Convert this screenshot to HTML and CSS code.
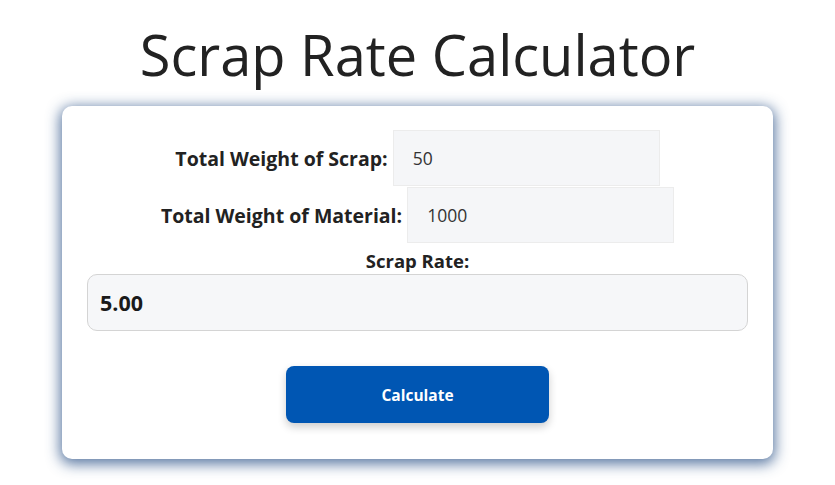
FILE: index.html
```html
<!DOCTYPE html>
<html lang="en">
<head>
<meta charset="utf-8">
<title>Scrap Rate Calculator</title>
<link rel="stylesheet" href="styles.css">
</head>
<body>
<h1 class="title">Scrap Rate Calculator</h1>
<div class="card">
  <div class="row">
    <label class="label" for="scrap">Total Weight of Scrap:</label>
    <input class="field" id="scrap" type="text" value="50">
  </div>
  <div class="row">
    <label class="label" for="material">Total Weight of Material:</label>
    <input class="field" id="material" type="text" value="1000">
  </div>
  <div class="result-label">Scrap Rate:</div>
  <div class="result">5.00</div>
  <div class="actions">
    <button class="btn" type="button">Calculate</button>
  </div>
</div>
</body>
</html>
```
FILE: styles.css
```css
html, body {
  margin: 0;
  padding: 0;
  background: #ffffff;
}
body {
  font-family: "Open Sans", "Noto Sans", sans-serif;
  color: #222222;
  padding-top: 14px;
  padding-bottom: 26px;
}
.title {
  margin: 0;
  text-align: center;
  font-weight: 400;
  font-size: 56px;
  line-height: 80px;
  color: #222222;
}
.card {
  width: 711px;
  box-sizing: border-box;
  margin: 12px auto 0;
  background: #fff;
  border-radius: 10px;
  padding: 24px 25px 36px;
  box-shadow: 0 3px 14px 2px rgba(60, 95, 145, 0.85);
}
.row {
  display: flex;
  justify-content: center;
  align-items: center;
  gap: 5px;
  margin-bottom: 1px;
}
.label {
  font-weight: 700;
  font-size: 19.5px;
  color: #222;
}
.field {
  width: 267px;
  height: 56px;
  box-sizing: border-box;
  border: 1px solid #ececec;
  background: #f5f6f8;
  padding: 0 19px;
  font-family: inherit;
  font-size: 17.5px;
  color: #333;
  outline: none;
  margin: 0;
}
.result-label {
  text-align: center;
  font-weight: 700;
  font-size: 18.5px;
  margin-top: 4px;
  line-height: 27px;
}
.result {
  height: 57px;
  box-sizing: border-box;
  border: 1px solid #d4d4d4;
  border-radius: 10px;
  background: #f6f7f9;
  display: flex;
  align-items: center;
  padding: 0 12px;
  font-weight: 700;
  font-size: 21.5px;
  color: #1a1a1a;
}
.actions {
  display: flex;
  justify-content: center;
  margin-top: 35px;
}
.btn {
  width: 263px;
  height: 57px;
  border: none;
  border-radius: 8px;
  background: #0056b3;
  color: #fff;
  font-family: inherit;
  font-weight: 700;
  font-size: 15.5px;
  box-shadow: 0 4px 8px rgba(0, 0, 0, 0.2);
}
```
